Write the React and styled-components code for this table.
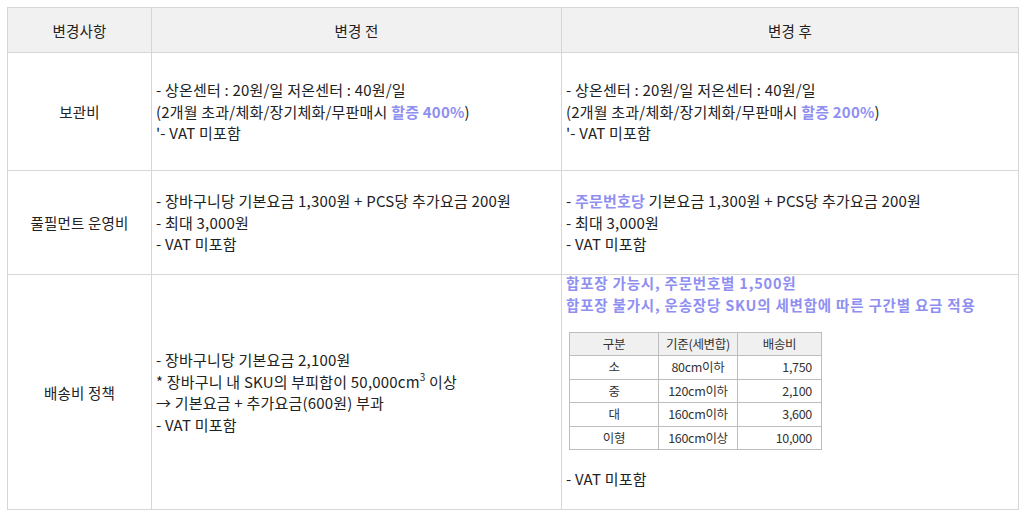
import React from 'react';
import styled, { createGlobalStyle } from 'styled-components';

const GlobalStyle = createGlobalStyle`
  html, body {
    margin: 0;
    padding: 0;
    background: #ffffff;
  }
  body {
    font-family: "Noto Sans CJK KR", "Noto Sans", sans-serif;
    color: #222222;
  }
`;

const Page = styled.div`
  padding: 7px 9px 0 7px;
`;

const Table = styled.table`
  width: 1011px;
  border-collapse: collapse;
  table-layout: fixed;
  font-size: 15px;
  letter-spacing: 0.2px;
`;

const Head = styled.th`
  height: 44px;
  padding: 0;
  background: #f1f1f1;
  border: 1px solid #d6d6d6;
  font-weight: 400;
  font-size: 14.5px;
  text-align: center;
  color: #222;
`;

const Label = styled.td`
  border: 1px solid #d6d6d6;
  text-align: center;
  vertical-align: middle;
  font-size: 14.5px;
  height: ${({ h }) => h}px;
  padding: 0;
`;

const Cell = styled.td`
  border: 1px solid #d6d6d6;
  vertical-align: ${({ top }) => (top ? 'top' : 'middle')};
  padding: 0 4px;
  line-height: 21.5px;
`;

const Line = styled.div`
  white-space: nowrap;
`;

const Mark = styled.span`
  color: #8f8ff2;
  font-weight: 700;
`;

const Notes = styled.div`
  margin-top: -3px;
`;

const Note = styled.div`
  color: #8f8ff2;
  font-weight: 700;
  font-size: 14.5px;
  letter-spacing: 0.8px;
  line-height: 22px;
  white-space: nowrap;
`;

const Sup = styled.sup`
  font-size: 10px;
  line-height: 0;
  vertical-align: 7px;
`;

const Fee = styled.table`
  margin: 16px 0 0 3px;
  width: 252px;
  border-collapse: collapse;
  table-layout: fixed;
  font-size: 12.5px;
  color: #333;
  letter-spacing: -0.3px;
`;

const FeeHead = styled.th`
  height: 22px;
  padding: 0;
  background: #f0f0f0;
  border: 1px solid #bdbdbd;
  font-weight: 400;
  text-align: center;
`;

const FeeCell = styled.td`
  height: 22.5px;
  padding: 0 ${({ num }) => (num ? '9px' : '0')} 0 0;
  border: 1px solid #bdbdbd;
  text-align: ${({ num }) => (num ? 'right' : 'center')};
  line-height: 22px;
`;

const Vat = styled.div`
  margin-top: 18px;
  padding-bottom: 18px;
`;

const fees = [
  ['소', '80cm이하', '1,750'],
  ['중', '120cm이하', '2,100'],
  ['대', '160cm이하', '3,600'],
  ['이형', '160cm이상', '10,000'],
];

export default function App() {
  return (
    <Page>
      <GlobalStyle />
      <Table>
        <colgroup>
          <col style={{ width: 144 }} />
          <col style={{ width: 410 }} />
          <col style={{ width: 457 }} />
        </colgroup>
        <thead>
          <tr>
            <Head>변경사항</Head>
            <Head>변경 전</Head>
            <Head>변경 후</Head>
          </tr>
        </thead>
        <tbody>
          <tr>
            <Label h={117}>보관비</Label>
            <Cell>
              <Line>- 상온센터 : 20원/일 저온센터 : 40원/일</Line>
              <Line>(2개월 초과/체화/장기체화/무판매시 <Mark>할증 400%</Mark>)</Line>
              <Line>'- VAT 미포함</Line>
            </Cell>
            <Cell>
              <Line>- 상온센터 : 20원/일 저온센터 : 40원/일</Line>
              <Line>(2개월 초과/체화/장기체화/무판매시 <Mark>할증 200%</Mark>)</Line>
              <Line>'- VAT 미포함</Line>
            </Cell>
          </tr>
          <tr>
            <Label h={103}>풀필먼트 운영비</Label>
            <Cell>
              <Line>- 장바구니당 기본요금 1,300원 + PCS당 추가요금 200원</Line>
              <Line>- 최대 3,000원</Line>
              <Line>- VAT 미포함</Line>
            </Cell>
            <Cell>
              <Line>- <Mark>주문번호당</Mark> 기본요금 1,300원 + PCS당 추가요금 200원</Line>
              <Line>- 최대 3,000원</Line>
              <Line>- VAT 미포함</Line>
            </Cell>
          </tr>
          <tr>
            <Label h={234}>배송비 정책</Label>
            <Cell>
              <Line>- 장바구니당 기본요금 2,100원</Line>
              <Line>* 장바구니 내 SKU의 부피합이 50,000cm<Sup>3</Sup> 이상</Line>
              <Line>→ 기본요금 + 추가요금(600원) 부과</Line>
              <Line>- VAT 미포함</Line>
            </Cell>
            <Cell top>
              <Notes>
                <Note>합포장 가능시, 주문번호별 1,500원</Note>
                <Note>합포장 불가시, 운송장당 SKU의 세변합에 따른 구간별 요금 적용</Note>
              </Notes>
              <Fee>
                <colgroup>
                  <col style={{ width: 89 }} />
                  <col style={{ width: 79 }} />
                  <col style={{ width: 84 }} />
                </colgroup>
                <thead>
                  <tr>
                    <FeeHead>구분</FeeHead>
                    <FeeHead>기준(세변합)</FeeHead>
                    <FeeHead>배송비</FeeHead>
                  </tr>
                </thead>
                <tbody>
                  {fees.map((r) => (
                    <tr key={r[0]}>
                      <FeeCell>{r[0]}</FeeCell>
                      <FeeCell>{r[1]}</FeeCell>
                      <FeeCell num>{r[2]}</FeeCell>
                    </tr>
                  ))}
                </tbody>
              </Fee>
              <Vat>- VAT 미포함</Vat>
            </Cell>
          </tr>
        </tbody>
      </Table>
    </Page>
  );
}
